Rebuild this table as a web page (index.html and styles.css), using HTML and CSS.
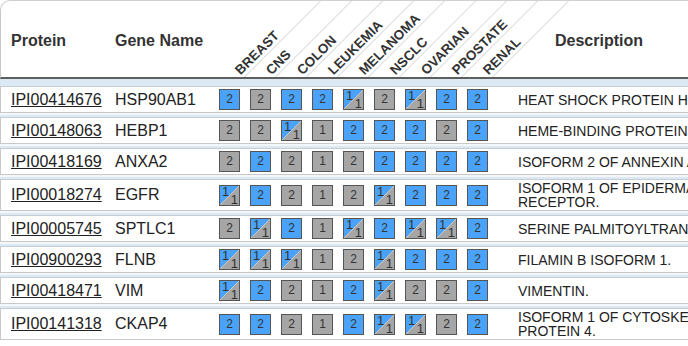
FILE: index.html
```html
<!DOCTYPE html>
<html>
<head>
<meta charset="utf-8">
<link rel="stylesheet" href="styles.css">
</head>
<body>
<div class="table">
  <div class="head">
    <div class="hcell h-protein">Protein</div>
    <div class="hcell h-gene">Gene Name</div>
    <div class="tcol"><div class="slant"></div><span class="lbl">BREAST</span></div>
    <div class="tcol"><div class="slant"></div><span class="lbl">CNS</span></div>
    <div class="tcol"><div class="slant"></div><span class="lbl">COLON</span></div>
    <div class="tcol"><div class="slant"></div><span class="lbl">LEUKEMIA</span></div>
    <div class="tcol"><div class="slant"></div><span class="lbl">MELANOMA</span></div>
    <div class="tcol"><div class="slant"></div><span class="lbl">NSCLC</span></div>
    <div class="tcol"><div class="slant"></div><span class="lbl">OVARIAN</span></div>
    <div class="tcol"><div class="slant"></div><span class="lbl">PROSTATE</span></div>
    <div class="tcol"><div class="slant"></div><span class="lbl">RENAL</span></div>
    <div class="hcell h-desc">Description</div>
  </div>
  <div class="rows">
    <div class="row">
      <div class="c-protein"><a href="#">IPI00414676</a></div>
      <div class="c-gene">HSP90AB1</div>
      <div class="cell"><span class="box b">2</span></div>
      <div class="cell"><span class="box g">2</span></div>
      <div class="cell"><span class="box b">2</span></div>
      <div class="cell"><span class="box b">2</span></div>
      <div class="cell"><span class="box s"><i>1</i><i>1</i></span></div>
      <div class="cell"><span class="box g">2</span></div>
      <div class="cell"><span class="box s"><i>1</i><i>1</i></span></div>
      <div class="cell"><span class="box b">2</span></div>
      <div class="cell"><span class="box b">2</span></div>
      <div class="c-desc">HEAT SHOCK PROTEIN HSP 90-BETA.</div>
    </div>
    <div class="row">
      <div class="c-protein"><a href="#">IPI00148063</a></div>
      <div class="c-gene">HEBP1</div>
      <div class="cell"><span class="box g">2</span></div>
      <div class="cell"><span class="box g">2</span></div>
      <div class="cell"><span class="box s"><i>1</i><i>1</i></span></div>
      <div class="cell"><span class="box g">1</span></div>
      <div class="cell"><span class="box b">2</span></div>
      <div class="cell"><span class="box b">2</span></div>
      <div class="cell"><span class="box b">2</span></div>
      <div class="cell"><span class="box g">2</span></div>
      <div class="cell"><span class="box b">2</span></div>
      <div class="c-desc">HEME-BINDING PROTEIN 1.</div>
    </div>
    <div class="row">
      <div class="c-protein"><a href="#">IPI00418169</a></div>
      <div class="c-gene">ANXA2</div>
      <div class="cell"><span class="box g">2</span></div>
      <div class="cell"><span class="box b">2</span></div>
      <div class="cell"><span class="box g">2</span></div>
      <div class="cell"><span class="box g">1</span></div>
      <div class="cell"><span class="box g">2</span></div>
      <div class="cell"><span class="box b">2</span></div>
      <div class="cell"><span class="box b">2</span></div>
      <div class="cell"><span class="box b">2</span></div>
      <div class="cell"><span class="box b">2</span></div>
      <div class="c-desc">ISOFORM 2 OF ANNEXIN A2.</div>
    </div>
    <div class="row">
      <div class="c-protein"><a href="#">IPI00018274</a></div>
      <div class="c-gene">EGFR</div>
      <div class="cell"><span class="box s"><i>1</i><i>1</i></span></div>
      <div class="cell"><span class="box b">2</span></div>
      <div class="cell"><span class="box g">2</span></div>
      <div class="cell"><span class="box g">1</span></div>
      <div class="cell"><span class="box g">2</span></div>
      <div class="cell"><span class="box s"><i>1</i><i>1</i></span></div>
      <div class="cell"><span class="box b">2</span></div>
      <div class="cell"><span class="box b">2</span></div>
      <div class="cell"><span class="box b">2</span></div>
      <div class="c-desc">ISOFORM 1 OF EPIDERMAL GROWTH FACTOR RECEPTOR.</div>
    </div>
    <div class="row">
      <div class="c-protein"><a href="#">IPI00005745</a></div>
      <div class="c-gene">SPTLC1</div>
      <div class="cell"><span class="box g">2</span></div>
      <div class="cell"><span class="box s"><i>1</i><i>1</i></span></div>
      <div class="cell"><span class="box b">2</span></div>
      <div class="cell"><span class="box g">1</span></div>
      <div class="cell"><span class="box s"><i>1</i><i>1</i></span></div>
      <div class="cell"><span class="box b">2</span></div>
      <div class="cell"><span class="box s"><i>1</i><i>1</i></span></div>
      <div class="cell"><span class="box s"><i>1</i><i>1</i></span></div>
      <div class="cell"><span class="box b">2</span></div>
      <div class="c-desc">SERINE PALMITOYLTRANSFERASE 1.</div>
    </div>
    <div class="row">
      <div class="c-protein"><a href="#">IPI00900293</a></div>
      <div class="c-gene">FLNB</div>
      <div class="cell"><span class="box s"><i>1</i><i>1</i></span></div>
      <div class="cell"><span class="box s"><i>1</i><i>1</i></span></div>
      <div class="cell"><span class="box s"><i>1</i><i>1</i></span></div>
      <div class="cell"><span class="box g">1</span></div>
      <div class="cell"><span class="box g">2</span></div>
      <div class="cell"><span class="box s"><i>1</i><i>1</i></span></div>
      <div class="cell"><span class="box b">2</span></div>
      <div class="cell"><span class="box b">2</span></div>
      <div class="cell"><span class="box b">2</span></div>
      <div class="c-desc">FILAMIN B ISOFORM 1.</div>
    </div>
    <div class="row">
      <div class="c-protein"><a href="#">IPI00418471</a></div>
      <div class="c-gene">VIM</div>
      <div class="cell"><span class="box s"><i>1</i><i>1</i></span></div>
      <div class="cell"><span class="box b">2</span></div>
      <div class="cell"><span class="box g">2</span></div>
      <div class="cell"><span class="box g">1</span></div>
      <div class="cell"><span class="box b">2</span></div>
      <div class="cell"><span class="box s"><i>1</i><i>1</i></span></div>
      <div class="cell"><span class="box g">2</span></div>
      <div class="cell"><span class="box g">2</span></div>
      <div class="cell"><span class="box b">2</span></div>
      <div class="c-desc">VIMENTIN.</div>
    </div>
    <div class="row">
      <div class="c-protein"><a href="#">IPI00141318</a></div>
      <div class="c-gene">CKAP4</div>
      <div class="cell"><span class="box b">2</span></div>
      <div class="cell"><span class="box b">2</span></div>
      <div class="cell"><span class="box g">2</span></div>
      <div class="cell"><span class="box g">1</span></div>
      <div class="cell"><span class="box b">2</span></div>
      <div class="cell"><span class="box s"><i>1</i><i>1</i></span></div>
      <div class="cell"><span class="box s"><i>1</i><i>1</i></span></div>
      <div class="cell"><span class="box g">2</span></div>
      <div class="cell"><span class="box b">2</span></div>
      <div class="c-desc">ISOFORM 1 OF CYTOSKELETON-ASSOCIATED PROTEIN 4.</div>
    </div>
  </div>
</div>
</body>
</html>
```

FILE: styles.css
```css
html, body {
  margin: 0;
  padding: 0;
  overflow: hidden;
  background: #ffffff;
}
body {
  font-family: "Liberation Sans", Arial, sans-serif;
  color: #222222;
}
.table {
  width: 900px;
}
.head {
  display: grid;
  grid-template-columns: 103px 110px repeat(9, 31px) 400px;
  height: 76px;
  border-top: 1px solid #d0d0d0;
  border-left: 1px solid #c8c8c8;
  border-top-left-radius: 10px;
  border-bottom: 2px solid #5e5e5e;
  background: #ffffff;
}
.hcell {
  font-weight: bold;
  font-size: 16px;
  color: #333333;
  display: flex;
  align-items: center;
  padding-top: 4px;
}
.h-protein { padding-left: 10px; }
.h-gene { padding-left: 11px; }
.h-desc { padding-left: 62px; }
.tcol {
  display: grid;
  grid-template-columns: 31px;
  grid-template-rows: 76px;
}
.slant {
  grid-area: 1 / 1;
  width: 31px;
  height: 76px;
  box-sizing: border-box;
  border-right: 1px solid #cfcfcf;
  transform-origin: 0 100%;
  transform: skewX(-45deg);
}
.lbl {
  grid-area: 1 / 1;
  align-self: end;
  justify-self: start;
  margin-left: 28px;
  margin-bottom: 0;
  font-size: 13.5px;
  font-weight: bold;
  line-height: 13px;
  color: #333333;
  white-space: nowrap;
  transform-origin: 0 100%;
  transform: rotate(-45deg);
}
.rows {
  display: flex;
  flex-direction: column;
  gap: 4px;
  padding-top: 7px;
  background: #dce8f2;
}
.row {
  display: grid;
  grid-template-columns: 103px 110px repeat(9, 31px) 400px;
  align-items: center;
  background: #ffffff;
  border-left: 1px solid #c8c8c8;
  border-top: 1px solid #c6ced4;
  border-bottom: 1px solid #c8c8c8;
  box-shadow: 0 2px 0 #f3f7fa;
  padding: 1px 0;
}
.c-protein {
  padding-left: 10px;
  font-size: 16px;
}
.c-protein a {
  color: #222222;
  text-decoration: underline;
}
.c-gene {
  padding-left: 11px;
  font-size: 16px;
}
.cell {
  display: flex;
  justify-content: center;
}
.c-desc {
  padding-left: 25px;
  width: 340px;
  font-size: 14px;
  line-height: 14px;
}
.box {
  box-sizing: border-box;
  width: 21px;
  height: 21px;
  margin: 1px 0;
  border: 1px solid #555555;
  font-size: 12px;
  line-height: 19px;
  text-align: center;
  color: #333333;
}
.box.b { background: #4aa3f8; }
.box.g { background: #a6a6a6; }
.box.s {
  display: grid;
  background: linear-gradient(to bottom right, #4aa3f8 49%, #c9c9c9 50%, #a6a6a6 52%);
  line-height: 10px;
  font-size: 13px;
}
.box.s i {
  grid-area: 1 / 1;
  font-style: normal;
}
.box.s i:first-child {
  align-self: start;
  justify-self: start;
  margin: 1px 0 0 2px;
}
.box.s i:last-child {
  align-self: end;
  justify-self: end;
  margin: 0 1px 0 0;
}
```
